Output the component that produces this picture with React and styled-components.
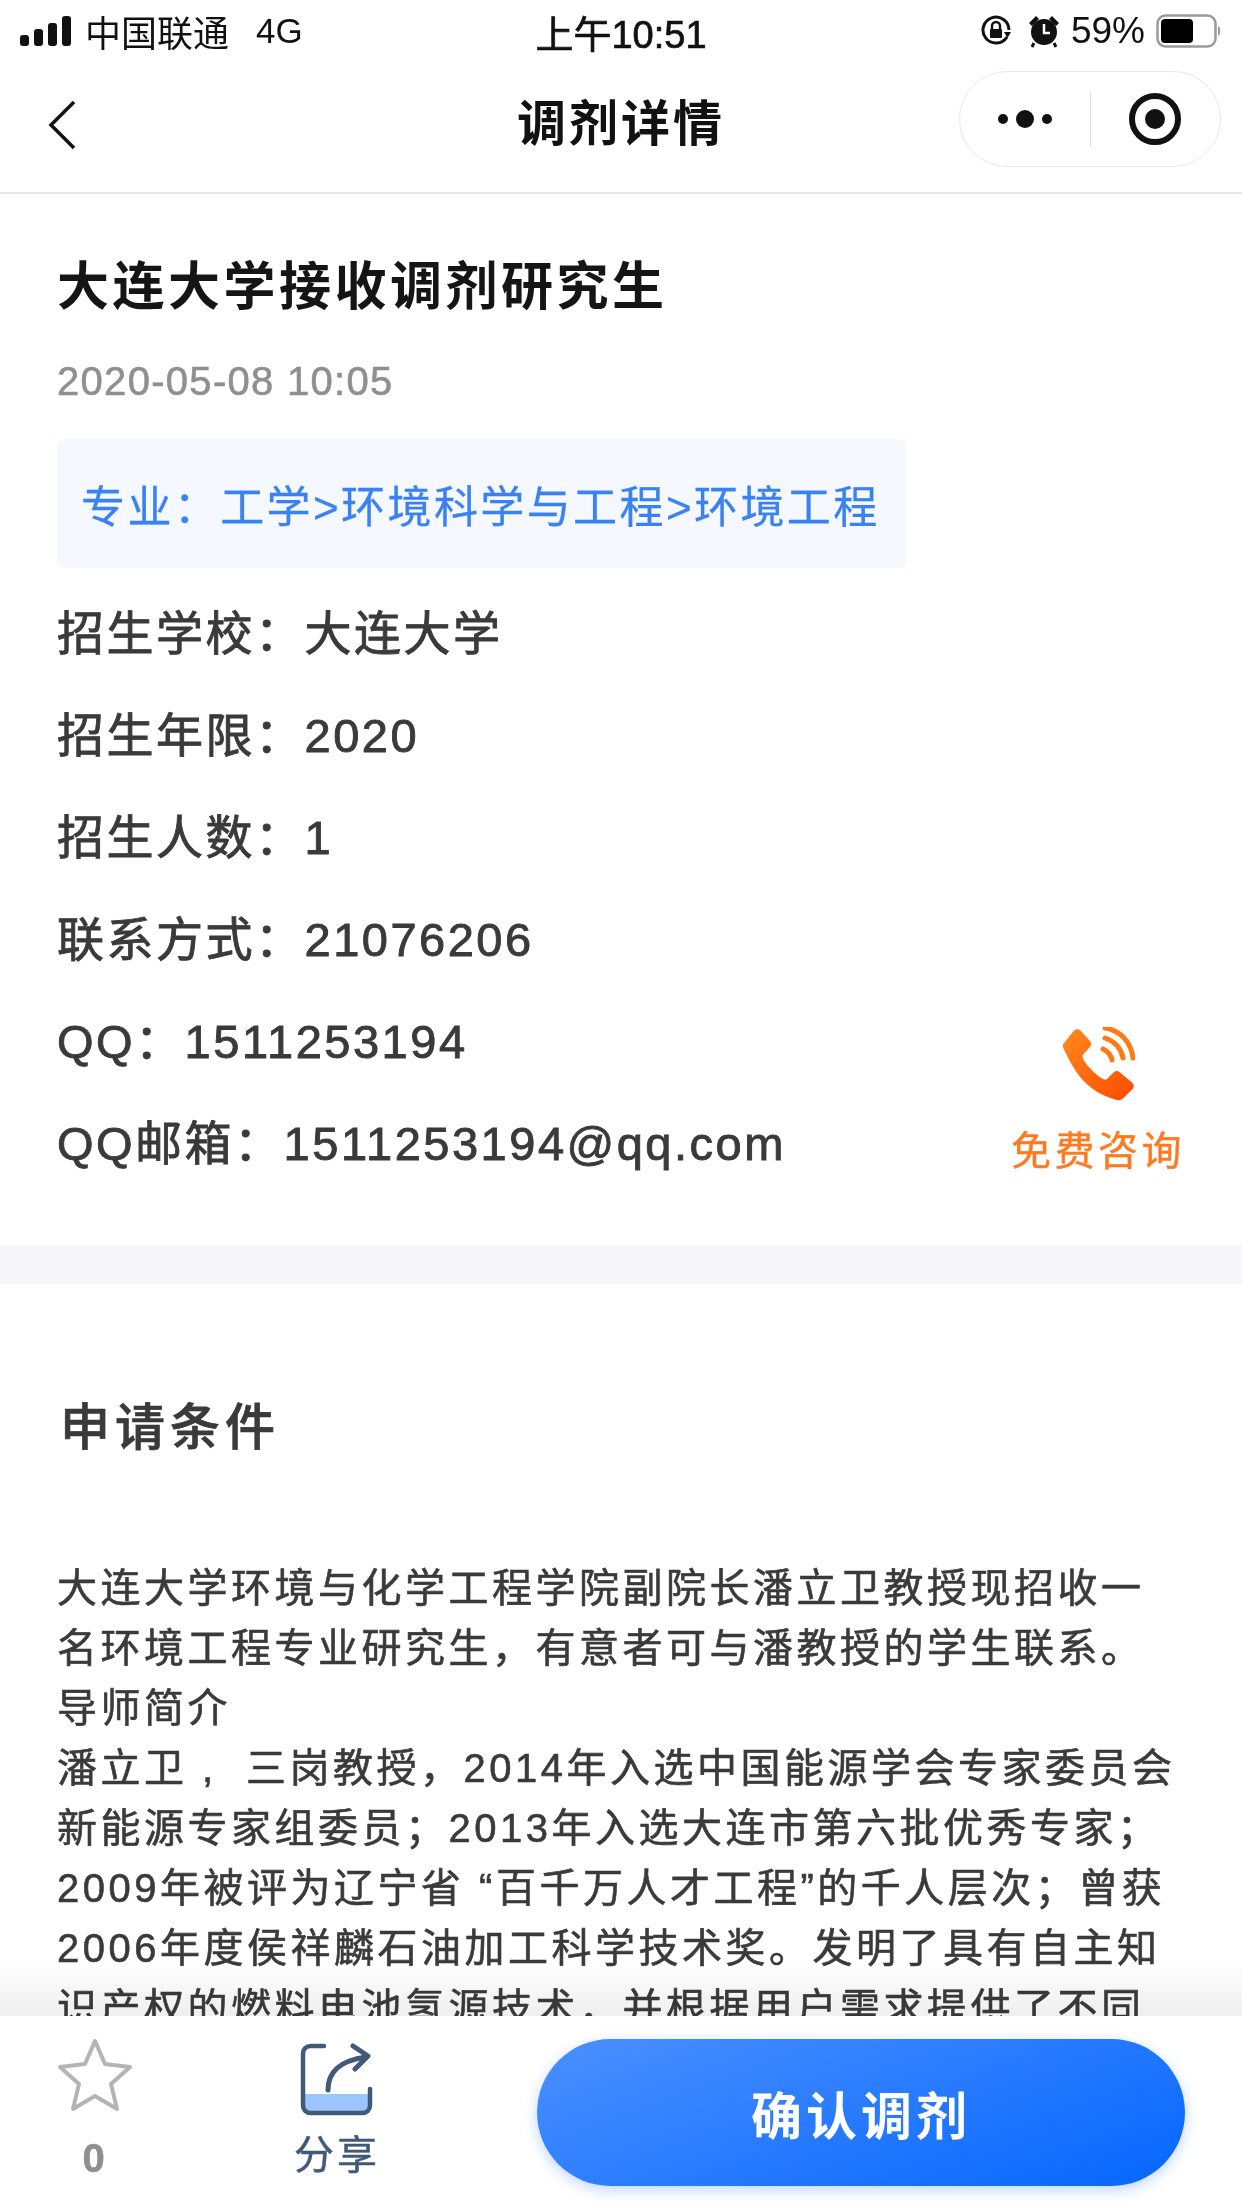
import styled, { createGlobalStyle } from 'styled-components';

const FONT = `"Liberation Sans", "Noto Sans CJK SC", sans-serif`;

const GlobalStyle = createGlobalStyle`
	html, body {
		margin: 0;
		padding: 0;
		background: #fff;
		font-family: ${FONT};
	}
`;

const Page = styled.div`
	position: relative;
	width: 1242px;
	height: 2208px;
	overflow: hidden;
	background: #fff;
`;

const StatusBar = styled.div`
	display: grid;
	grid-template-columns: 1fr auto 1fr;
	align-items: center;
	height: 62px;
	padding: 0 20px;
	color: #111;
`;

const StatusLeft = styled.div`
	display: flex;
	align-items: center;
	font-size: 36px;
`;

const Carrier = styled.span`
	margin-left: 13px;
`;

const Network = styled.span`
	margin-left: 27px;
	font-size: 35px;
`;

const Clock = styled.div`
	font-size: 38px;
	font-weight: 400;
	-webkit-text-stroke: 0.7px #111;
`;

const StatusRight = styled.div`
	display: flex;
	align-items: center;
	justify-content: flex-end;
	gap: 11px;
	font-size: 37px;
`;

const StatusIcons = styled.div`
	display: flex;
	align-items: center;
	gap: 16px;
`;

const NavBar = styled.div`
	position: relative;
	display: flex;
	align-items: center;
	justify-content: space-between;
	box-sizing: border-box;
	height: 132px;
	padding: 0 21px 16px 48px;
	border-bottom: 2px solid #e4e4e4;
`;

const BackButton = styled.div`
	display: flex;
	padding-top: 12px;
`;

const NavTitle = styled.div`
	position: absolute;
	left: 0;
	right: 0;
	text-align: center;
	font-size: 49px;
	letter-spacing: 3px;
	font-weight: 700;
	color: #111;
`;

const Capsule = styled.div`
	display: flex;
	align-items: center;
	width: 262px;
	height: 96px;
	box-sizing: border-box;
	border: 1px solid #e9e9e9;
	border-radius: 48px;
`;

const CapsuleHalf = styled.div`
	display: flex;
	align-items: center;
	justify-content: center;
	flex: 1;
	height: 54px;
	& + & {
		border-left: 1px solid #dcdcdc;
	}
`;

const InfoSection = styled.section`
	padding: 56px 57px 0;
	height: 1052px;
	box-sizing: border-box;
`;

const Title = styled.h1`
	margin: 0;
	font-size: 52px;
	line-height: 74px;
	letter-spacing: 3.5px;
	font-weight: 700;
	color: #151515;
`;

const DateLine = styled.div`
	margin-top: 35px;
	font-size: 40px;
	line-height: 44px;
	letter-spacing: 1.3px;
	color: #8f8f8f;
	-webkit-text-stroke: 0.6px #8f8f8f;
`;

const MajorTag = styled.div`
	display: flex;
	align-items: center;
	box-sizing: border-box;
	width: 849px;
	height: 129px;
	margin-top: 36px;
	margin-bottom: 15px;
	padding-left: 24px;
	background: #f5f8fe;
	border-radius: 8px;
	font-size: 44px;
	letter-spacing: 2.4px;
	color: #3a82f2;
	-webkit-text-stroke: 0.3px #3a82f2;
	white-space: nowrap;
`;

const InfoRow = styled.div`
	height: 102px;
	line-height: 102px;
	font-size: 47px;
	letter-spacing: 2.5px;
	color: #3a3a3a;
	-webkit-text-stroke: 0.9px #3a3a3a;
	white-space: nowrap;
`;

const Consult = styled.div`
	position: absolute;
	left: 1013px;
	top: 1027px;
	display: flex;
	flex-direction: column;
	align-items: center;
	width: 170px;
`;

const ConsultLabel = styled.div`
	margin-top: 26px;
	font-size: 40px;
	line-height: 48px;
	letter-spacing: 3.5px;
	color: #ff7a1f;
	-webkit-text-stroke: 0.4px #ff7a1f;
	white-space: nowrap;
`;

const Divider = styled.div`
	height: 38px;
	background: #f6f6fb;
`;

const ArticleSection = styled.section`
	padding: 104px 57px 0;
`;

const Heading = styled.h2`
	margin: 0 0 0 3px;
	font-size: 50px;
	line-height: 80px;
	letter-spacing: 5px;
	font-weight: 500;
	color: #3a3a3a;
	-webkit-text-stroke: 0.7px #3a3a3a;
`;

const Article = styled.div`
	margin-top: 90px;
	font-size: 40px;
	line-height: 60px;
	letter-spacing: 3.5px;
	color: #3a3a3a;
	-webkit-text-stroke: 0.6px #3a3a3a;
`;

const ArticleLine = styled.div`
	white-space: nowrap;
`;

const BottomFade = styled.div`
	position: absolute;
	left: 0;
	right: 0;
	bottom: 192px;
	height: 56px;
	background: linear-gradient(to bottom, #ffffff, #efefef);
	mix-blend-mode: multiply;
	pointer-events: none;
`;

const BottomBar = styled.div`
	position: absolute;
	left: 0;
	right: 0;
	bottom: 0;
	display: flex;
	align-items: flex-start;
	height: 192px;
	background: #fff;
`;

const ToolItem = styled.div`
	display: flex;
	flex-direction: column;
	align-items: center;
	width: ${({ $width }) => $width}px;
	margin-left: ${({ $left }) => $left}px;
	padding-top: ${({ $top }) => $top}px;
`;

const ToolLabel = styled.div`
	margin-top: ${({ $gap }) => $gap}px;
	font-size: ${({ $size }) => $size}px;
	font-weight: ${({ $bold }) => ($bold ? 700 : 400)};
	line-height: 48px;
	letter-spacing: 3px;
	color: ${({ $color }) => $color};
	-webkit-text-stroke: 0.5px ${({ $color }) => $color};
`;

const ConfirmButton = styled.div`
	display: flex;
	align-items: center;
	justify-content: center;
	width: 648px;
	height: 147px;
	margin-top: 23px;
	margin-left: auto;
	margin-right: 57px;
	border-radius: 74px;
	background: linear-gradient(160deg, #4b90ff 0%, #0566ff 100%);
	box-shadow: 0 4px 14px rgba(40, 120, 255, 0.3);
	font-size: 51px;
	font-weight: 700;
	letter-spacing: 4px;
	color: #fff;
`;

const SignalIcon = () => (
	<svg width="52" height="30" viewBox="0 0 52 30">
		<rect x="0" y="19" width="9" height="11" rx="3" fill="#111" />
		<rect x="14" y="13" width="9" height="17" rx="3" fill="#111" />
		<rect x="28" y="7" width="9" height="23" rx="3" fill="#111" />
		<rect x="42" y="0" width="9" height="30" rx="3" fill="#111" />
	</svg>
);

const LockIcon = () => (
	<svg width="32" height="32" viewBox="0 0 32 32">
		<path d="M27 22 A13 13 0 1 1 29 15" fill="none" stroke="#111" strokeWidth="3" />
		<path d="M24 17 L31 17 L27.5 23 Z" fill="#111" />
		<rect x="10" y="14" width="12" height="9" rx="1" fill="#111" />
		<path d="M12 14 V11 A4 4 0 0 1 20 11 V14" fill="none" stroke="#111" strokeWidth="2.4" />
	</svg>
);

const AlarmIcon = () => (
	<svg width="32" height="34" viewBox="0 0 32 34">
		<circle cx="16" cy="18" r="13" fill="#111" />
		<path d="M1 9 L8 2 L11 5 L4 12 Z M31 9 L24 2 L21 5 L28 12 Z" fill="#111" />
		<path d="M16 10 V19 H22" fill="none" stroke="#fff" strokeWidth="2.5" />
		<path d="M6 29 L4 33 M26 29 L28 33" stroke="#111" strokeWidth="3" />
	</svg>
);

const BatteryIcon = () => (
	<svg width="66" height="34" viewBox="0 0 66 34">
		<rect x="1.5" y="1.5" width="58" height="31" rx="8" fill="none" stroke="#9a9a9a" strokeWidth="2.500" />
		<rect x="5" y="5" width="32" height="24" rx="4" fill="#000" />
		<path d="M62 12 C65 13 65 21 62 22 Z" fill="#9a9a9a" />
	</svg>
);

const BackIcon = () => (
	<svg width="28" height="50" viewBox="0 0 28 50">
		<path d="M26 2 L3 25 L26 48" fill="none" stroke="#111" strokeWidth="3.500" />
	</svg>
);

const DotsIcon = () => (
	<svg width="54" height="18" viewBox="0 0 54 18">
		<circle cx="5" cy="9" r="5" fill="#111" />
		<circle cx="27" cy="9" r="9" fill="#111" />
		<circle cx="49" cy="9" r="5" fill="#111" />
	</svg>
);

const TargetIcon = () => (
	<svg width="52" height="52" viewBox="0 0 52 52">
		<circle cx="26" cy="26" r="23" fill="none" stroke="#111" strokeWidth="6" />
		<circle cx="26" cy="26" r="10" fill="#111" />
	</svg>
);

const PhoneIcon = () => (
	<svg width="74" height="74" viewBox="0 0 74 74">
		<defs>
			<linearGradient id="phoneFill" x1="0" y1="0" x2="1" y2="1">
				<stop offset="0" stopColor="#ff8a1e" />
				<stop offset="1" stopColor="#ff4a00" />
			</linearGradient>
		</defs>
		<path
			d="M3 16 L13 3.5 C15 1.5 17.5 1.5 19.5 3.5 L29 14 C30.5 16 30.5 18 29 20 L22.5 27 C21 29 21.5 31 23 33.5 C28 41 33 46 41 51.5 C43.5 53 45.5 53 47 51 L52.5 45.5 C54.5 43.5 56.5 43.5 58.5 45 L71 55.5 C73 57.5 73.500 60 71.5 62 L62 71.500 C60 73.500 57 73.500 54 72.500 C38 68 22 58 11 38 C7 31 4 25 2 20 C1.500 18.500 2 17 3 16 Z"
			fill="url(#phoneFill)"
		/>
		<path d="M42 22 C46 24 50 28 51 33" fill="none" stroke="#ff7a12" strokeWidth="5" strokeLinecap="round" />
		<path d="M44 11 C53 14 60 21 62 31" fill="none" stroke="#ff7a12" strokeWidth="5" strokeLinecap="round" />
		<path d="M44 1 C58 3 70 14 72 31" fill="none" stroke="#ff7a12" strokeWidth="5" strokeLinecap="round" />
	</svg>
);

const StarIcon = () => (
	<svg width="76" height="76" viewBox="0 0 76 76">
		<path
			d="M38 3 L48 26 L73 29 L54 46 L60 71 L38 58 L16 71 L22 46 L3 29 L28 26 Z"
			fill="none"
			stroke="#b4b4b4"
			strokeWidth="4"
			strokeLinejoin="round"
		/>
	</svg>
);

const ShareIcon = () => (
	<svg width="74" height="74" viewBox="0 0 74 74">
		<path d="M3 51 H70 V62 C70 67 67 70 62 70 H11 C6 70 3 67 3 62 Z" fill="#9cc4ff" />
		<path
			d="M24 3 H11 C6 3 3 6 3 11 V62 C3 67 6 70 11 70 H62 C67 70 70 67 70 62 V46"
			fill="none"
			stroke="#43597a"
			strokeWidth="4.500"
			strokeLinecap="round"
		/>
		<path d="M28 47 C28 30 38 18 66 14" fill="none" stroke="#43597a" strokeWidth="5" strokeLinecap="round" />
		<path d="M53 3 L68 13 L55 26" fill="none" stroke="#43597a" strokeWidth="5" strokeLinecap="round" strokeLinejoin="round" />
	</svg>
);

// full-width punctuation, written as escapes
const COLON = '\uFF1A';
const COMMA = '\uFF0C';
const SEMI = '\uFF1B';

const majorText = `专业${COLON}工学>环境科学与工程>环境工程`;

const infoRows = [
	`招生学校${COLON}大连大学`,
	`招生年限${COLON}2020`,
	`招生人数${COLON}1`,
	`联系方式${COLON}21076206`,
	`QQ${COLON}1511253194`,
	`QQ邮箱${COLON}1511253194@qq.com`,
];

const articleLines = [
	'大连大学环境与化学工程学院副院长潘立卫教授现招收一',
	`名环境工程专业研究生${COMMA}有意者可与潘教授的学生联系。`,
	'导师简介',
	`潘立卫 ,\u00a0 三岗教授${COMMA}2014年入选中国能源学会专家委员会`,
	`新能源专家组委员${SEMI}2013年入选大连市第六批优秀专家${SEMI}`,
	`2009年被评为辽宁省 “百千万人才工程”的千人层次${SEMI}曾获`,
	'2006年度侯祥麟石油加工科学技术奖。发明了具有自主知',
	`识产权的燃料电池氢源技术${COMMA}并根据用户需求提供了不同`,
];

const App = () => (
	<Page>
		<GlobalStyle />
		<StatusBar>
			<StatusLeft>
				<SignalIcon />
				<Carrier>中国联通</Carrier>
				<Network>4G</Network>
			</StatusLeft>
			<Clock>上午10:51</Clock>
			<StatusRight>
				<StatusIcons>
					<LockIcon />
					<AlarmIcon />
				</StatusIcons>
				<span>59%</span>
				<BatteryIcon />
			</StatusRight>
		</StatusBar>
		<NavBar>
			<BackButton>
				<BackIcon />
			</BackButton>
			<NavTitle>调剂详情</NavTitle>
			<Capsule>
				<CapsuleHalf>
					<DotsIcon />
				</CapsuleHalf>
				<CapsuleHalf>
					<TargetIcon />
				</CapsuleHalf>
			</Capsule>
		</NavBar>

		<InfoSection>
			<Title>大连大学接收调剂研究生</Title>
			<DateLine>2020-05-08 10:05</DateLine>
			<MajorTag>{majorText}</MajorTag>
			{infoRows.map((row) => (
				<InfoRow key={row}>{row}</InfoRow>
			))}
		</InfoSection>
		<Consult>
			<PhoneIcon />
			<ConsultLabel>免费咨询</ConsultLabel>
		</Consult>

		<Divider />

		<ArticleSection>
			<Heading>申请条件</Heading>
			<Article>
				{articleLines.map((line) => (
					<ArticleLine key={line}>{line}</ArticleLine>
				))}
			</Article>
		</ArticleSection>

		<BottomFade />
		<BottomBar>
			<ToolItem $width={96} $left={47} $top={22}>
				<StarIcon />
				<ToolLabel $gap={20} $size={40} $bold $color="#8f8f8f">
					0
				</ToolLabel>
			</ToolItem>
			<ToolItem $width={130} $left={129} $top={27}>
				<ShareIcon />
				<ToolLabel $gap={14} $size={40} $color="#43597a">
					分享
				</ToolLabel>
			</ToolItem>
			<ConfirmButton>确认调剂</ConfirmButton>
		</BottomBar>
	</Page>
);

export default App;
